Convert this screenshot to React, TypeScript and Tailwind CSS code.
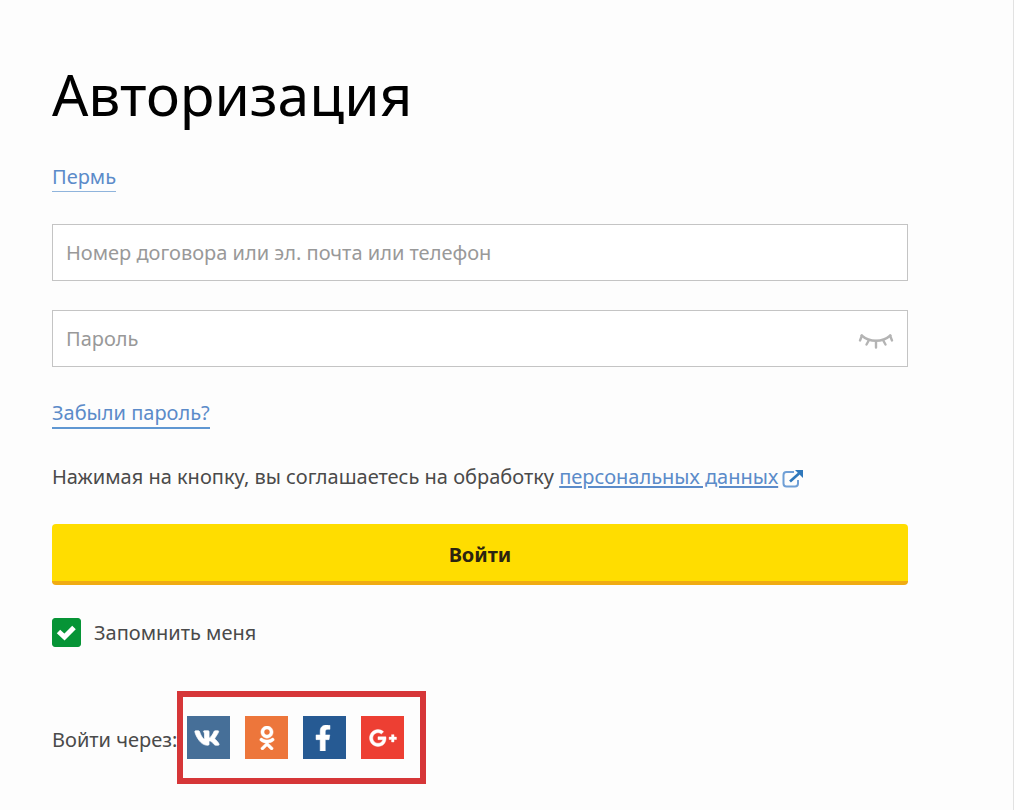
import React, { useState } from 'react';
import { FaVk, FaOdnoklassniki, FaFacebookF, FaGooglePlusG } from 'react-icons/fa';

const socials = [
  { name: 'ВКонтакте', icon: FaVk, className: 'bg-[#466f98] pr-1', iconClass: 'h-[26px] w-[26px] stroke-[16px]' },
  { name: 'Одноклассники', icon: FaOdnoklassniki, className: 'bg-[#ed763b]', iconClass: 'h-6 w-6 stroke-[10px]' },
  { name: 'Facebook', icon: FaFacebookF, className: 'bg-[#265a93] pr-1', iconClass: 'h-[26px] w-[26px] stroke-[10px]' },
  { name: 'Google+', icon: FaGooglePlusG, className: 'bg-[#ed3f33]', iconClass: 'h-7 w-7 stroke-[10px]' },
];

const inputClass =
  'block h-[57px] w-full border border-[#c4c4c4] bg-white px-[13px] placeholder:text-[#999] outline-none focus:border-[#888]';

const ClosedEyeIcon = () => (
  <svg viewBox="0 0 36 18" className="h-[18px] w-9" fill="none" stroke="#b4b4b4" strokeWidth="2.4" strokeLinecap="round">
    <path d="M3.500 3.500C12 10.500 24 10.500 32.500 3.500" />
    <path d="M4 3.500L2 8.500M11 8L8.500 12.500M18 9V15.500M25 8L27.500 12.500M32 3.500L34 8.500" />
  </svg>
);

const ExternalIcon = () => (
  <svg viewBox="0 0 22 20" className="h-5 w-[22px]" fill="none" stroke="#6f9fd6" strokeWidth="2">
    <path d="M12 3H4.500Q1.500 3 1.500 6V14.500Q1.500 17.500 4.500 17.500H13Q16 17.500 16 14.500V11" />
    <path d="M8 12.500L17 4.500" stroke="#2f78bb" strokeWidth="2.600" />
    <path d="M13 1H21V9Z" fill="#2f78bb" stroke="none" />
  </svg>
);

const App: React.FC = () => {
  const [showPassword, setShowPassword] = useState(false);
  const [remember, setRemember] = useState(true);

  return (
    <main className="min-h-screen border-r border-[#e2e2e2] bg-[#fdfdfd] pt-[58px] pr-[105px] pb-6 pl-[52px] font-['Noto_Sans',sans-serif] text-[20px] leading-7 text-[#4a4a4a]">
      <h1 className="text-[57px] leading-[72px] text-black">Авторизация</h1>

      <a href="#city" className="mt-[33px] inline-block border-b border-[#8fb4dc] text-[#5b8bc9]">
        Пермь
      </a>

      <form className="mt-8" onSubmit={(e) => e.preventDefault()}>
        <input type="text" aria-label="Логин" placeholder="Номер договора или эл. почта или телефон" className={inputClass} />

        <div className="relative mt-[29px]">
          <input
            type={showPassword ? 'text' : 'password'}
            aria-label="Пароль"
            placeholder="Пароль"
            className={inputClass}
          />
          <button
            type="button"
            aria-label="Показать пароль"
            onClick={() => setShowPassword(!showPassword)}
            className="absolute inset-y-0 right-3.5 flex items-center pt-1"
          >
            <ClosedEyeIcon />
          </button>
        </div>

        <a href="#restore" className="mt-8 inline-block border-b-2 border-[#5f97d2] text-[#5b8bc9]">
          Забыли пароль?
        </a>

        <p className="mt-[34px]">
          Нажимая на кнопку, вы соглашаетесь на обработку{' '}
          <a href="#personal-data" className="text-[#5b8bc9]">
            <span className="underline underline-offset-2">персональных данных</span>
            <span className="ml-1 inline-block align-middle">
              <ExternalIcon />
            </span>
          </a>
        </p>

        <button
          type="submit"
          className="mt-[33px] block h-[61px] w-full rounded border-b-4 border-[#f0ab12] bg-[#ffdd00] pt-1 font-bold text-[#2b2410]"
        >
          Войти
        </button>

        <label className="mt-[33px] flex w-fit items-center gap-[13px]">
          <span className="relative flex">
            <input
              type="checkbox"
              checked={remember}
              onChange={(e) => setRemember(e.target.checked)}
              className="h-[29px] w-[29px] appearance-none rounded-[3px] border border-[#069436] checked:bg-[#069436]"
            />
            {remember && (
              <svg viewBox="0 0 29 29" className="pointer-events-none absolute inset-0" fill="none" stroke="#fff" strokeWidth="5">
                <path d="M6.500 13.500L12.500 19L22 9.500" />
              </svg>
            )}
          </span>
          Запомнить меня
        </label>
      </form>

      <div className="mt-11 flex items-center">
        <span className="pt-1">Войти через:</span>
        <div className="flex gap-[15px] border-6 border-[#d63638] py-[19px] pr-4 pl-1">
          {socials.map(({ name, icon: Icon, className, iconClass }) => (
            <button key={name} type="button" aria-label={name} className={`flex h-[43px] w-[43px] items-center justify-center text-white ${className}`}>
              <Icon className={iconClass} />
            </button>
          ))}
        </div>
      </div>
    </main>
  );
};

export default App;
